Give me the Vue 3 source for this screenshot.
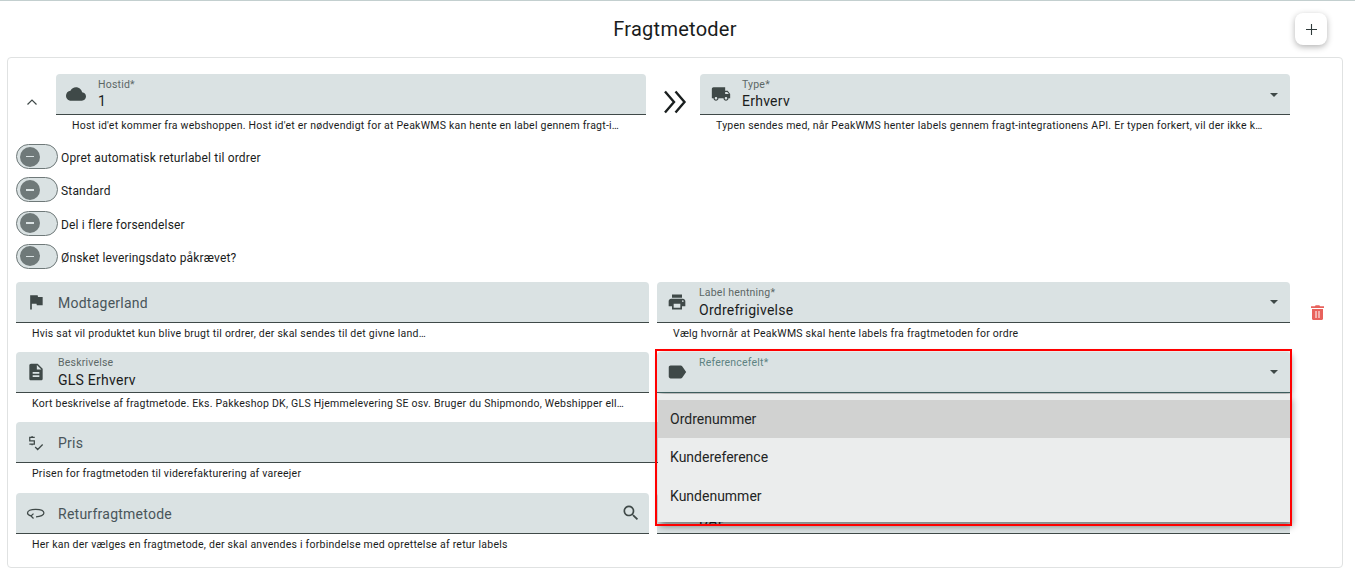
<script setup>
const icons = {
  cloud: 'M19.35 10.04C18.67 6.59 15.64 4 12 4 9.11 4 6.6 5.64 5.35 8.04 2.34 8.36 0 10.91 0 14c0 3.31 2.69 6 6 6h13c2.76 0 5-2.24 5-5 0-2.64-2.05-4.78-4.65-4.96z',
  truck: 'M20 8h-3V4H3c-1.1 0-2 .9-2 2v11h2c0 1.66 1.34 3 3 3s3-1.34 3-3h6c0 1.66 1.34 3 3 3s3-1.34 3-3h2v-5l-3-4zM6 18.5c-.83 0-1.5-.67-1.5-1.5s.67-1.5 1.5-1.5 1.5.67 1.5 1.5-.67 1.5-1.5 1.5zm13.5-9l1.96 2.5H17V9.5h2.5zm-1.5 9c-.83 0-1.5-.67-1.5-1.5s.67-1.5 1.5-1.5 1.5.67 1.5 1.5-.67 1.5-1.5 1.5z',
  flag: 'M14.4 6L14 4H5v17h2v-7h5.6l.4 2h7V6z',
  print: 'M19 8H5c-1.66 0-3 1.34-3 3v6h4v4h12v-4h4v-6c0-1.66-1.34-3-3-3zm-3 11H8v-5h8v5zm3-7c-.55 0-1-.45-1-1s.45-1 1-1 1 .45 1 1-.45 1-1 1zm-1-9H6v4h12V3z',
  doc: 'M14 2H6c-1.1 0-1.99.9-1.99 2L4 20c0 1.1.89 2 1.99 2H18c1.1 0 2-.9 2-2V8l-6-6zm2 16H8v-2h8v2zm0-4H8v-2h8v2zm-3-5V3.5L18.5 9H13z',
  label: 'M17.63 5.84C17.27 5.33 16.67 5 16 5L5 5.01C3.9 5.01 3 5.9 3 7v10c0 1.1.9 1.99 2 1.99L16 19c.67 0 1.27-.33 1.63-.84L22 12l-4.37-6.16z',
  price: 'M10.500 6.500H4.500V10.500H10V14.500H4M7.300 4.800V6.500M7.300 14.500V16M11 18L14 21L20 15',
  search: 'M15.5 14h-.79l-.28-.27C15.41 12.59 16 11.11 16 9.5 16 5.91 13.09 3 9.5 3S3 5.91 3 9.5 5.91 16 9.5 16c1.61 0 3.09-.59 4.23-1.57l.27.28v.79l5 4.99L20.49 19l-4.99-5zm-6 0C7.01 14 5 11.99 5 9.500S7.01 5 9.5 5 14 7.01 14 9.5 11.99 14 9.5 14z',
  ret: 'M12 16.500C17.500 16.500 21.500 14.500 21.500 12C21.500 9.300 17.500 7.500 11.500 7.500C5.500 7.500 1.800 9.300 1.800 12C1.800 13.500 3 14.700 6 15.500M9 12.800L6 15.600L9 18.600'
}
const lined = ['price', 'ret']
const toggles = ['Opret automatisk returlabel til ordrer', 'Standard', 'Del i flere forsendelser', 'Ønsket leveringsdato påkrævet?']
const top = [
  { icon: 'cloud', label: 'Hostid*', value: '1', help: "Host id'et kommer fra webshoppen. Host id'et er nødvendigt for at PeakWMS kan hente en label gennem fragt-i…" },
  { icon: 'truck', label: 'Type*', value: 'Erhverv', select: true, help: 'Typen sendes med, når PeakWMS henter labels gennem fragt-integrationens API. Er typen forkert, vil der ikke k…' }
]
const rows = [
  { id: 1, icon: 'flag', col: 'c1', placeholder: 'Modtagerland', help: 'Hvis sat vil produktet kun blive brugt til ordrer, der skal sendes til det givne land…' },
  { id: 2, icon: 'print', col: 'c2', label: 'Label hentning*', value: 'Ordrefrigivelse', select: true, help: 'Vælg hvornår at PeakWMS skal hente labels fra fragtmetoden for ordre' },
  { id: 3, icon: 'doc', col: 'c1', label: 'Beskrivelse', value: 'GLS Erhverv', help: 'Kort beskrivelse af fragtmetode. Eks. Pakkeshop DK, GLS Hjemmelevering SE osv. Bruger du Shipmondo, Webshipper ell…' },
  { id: 4, icon: 'label', col: 'c2', label: 'Referencefelt*', select: true, open: true },
  { id: 5, icon: 'price', col: 'wide', placeholder: 'Pris', help: 'Prisen for fragtmetoden til viderefakturering af vareejer' },
  { id: 6, icon: 'ret', col: 'c1 low', placeholder: 'Returfragtmetode', search: true, help: 'Her kan der vælges en fragtmetode, der skal anvendes i forbindelse med oprettelse af retur labels' },
  { id: 7, icon: 'label', col: 'c2 low', label: '', value: 'DAP', select: true }
]
const options = ['Ordrenummer', 'Kundereference', 'Kundenummer']
</script>

<template>
  <div class="page">
    <header class="head">
      <span></span>
      <h1>Fragtmetoder</h1>
      <button class="add" aria-label="Tilføj">
        <svg width="11" height="11" viewBox="0 0 11 11"><path d="M5.500 0v11M0 5.500h11" stroke="#2f3a3a" stroke-width="1.100" fill="none" /></svg>
      </button>
    </header>

    <section class="card">
      <div class="top">
        <svg class="collapse" viewBox="0 0 12 8"><path d="M1.500 6.500L6 2l4.500 4.500" stroke="#3f4948" stroke-width="1.200" fill="none" /></svg>
        <div class="cell">
          <div class="field">
            <svg class="ico" viewBox="0 0 24 24"><path :d="icons[top[0].icon]" /></svg>
            <div class="txt"><small>{{ top[0].label }}</small><b>{{ top[0].value }}</b></div>
          </div>
          <p class="help">{{ top[0].help }}</p>
        </div>
        <svg class="flow" viewBox="0 0 24 24"><path d="M2 1.500L11 12 2 22.500M12.500 1.500L21.500 12 12.500 22.500" stroke="#1a1f1f" stroke-width="2.400" fill="none" /></svg>
        <div class="cell">
          <div class="field">
            <svg class="ico shift" viewBox="0 0 24 24"><path :d="icons[top[1].icon]" /></svg>
            <div class="txt"><small>{{ top[1].label }}</small><b>{{ top[1].value }}</b></div>
            <i class="caret"></i>
          </div>
          <p class="help">{{ top[1].help }}</p>
        </div>
      </div>

      <div class="toggles">
        <label v-for="t in toggles" :key="t" class="toggle">
          <span class="track"><span class="knob"><span class="dash"></span></span></span>
          <span class="tname">{{ t }}</span>
        </label>
      </div>

      <div class="grid">
        <template v-for="r in rows" :key="r.id">
          <div class="cell" :class="[r.col, { open: r.open }]">
            <div class="field" :class="{ focus: r.open }">
              <svg class="ico" :class="{ line: lined.includes(r.icon) }" viewBox="0 0 24 24"><path :d="icons[r.icon]" /></svg>
              <div v-if="r.placeholder" class="ph">{{ r.placeholder }}</div>
              <div v-else class="txt lower"><small class="lab">{{ r.label }}</small><b class="val">{{ r.value }}</b></div>
              <i v-if="r.select" class="caret"></i>
              <svg v-if="r.search" class="find" viewBox="0 0 24 24"><path :d="icons.search" /></svg>
            </div>
            <p v-if="r.help" class="help">{{ r.help }}</p>
            <ul v-if="r.open" class="menu">
              <li v-for="(o, i) in options" :key="o" :class="{ active: i === 0 }">{{ o }}</li>
            </ul>
            <div v-if="r.open" class="mark"></div>
          </div>
          <svg v-if="r.icon === 'print'" class="trash" viewBox="0 0 13 15">
            <path d="M1 4h11v9.800c0 .7-.5 1.200-1.200 1.200H2.200C1.500 15 1 14.500 1 13.800zM0 1.300h3.800L4.700.3h3.600l.9 1H13v1.700H0z" fill="#e8625c" />
            <path d="M5 6v7M8 6v7" stroke="#fff" stroke-width="1" />
          </svg>
        </template>
      </div>
    </section>
  </div>
</template>

<style>
html, body { margin: 0; background: #fff; }
</style>

<style scoped>
* { box-sizing: border-box; }
.page { font-family: Roboto, "Liberation Sans", sans-serif; color: #1a1c1c; height: 579px; overflow: hidden; border-top: 1px solid #c3cfcf; }
.head { height: 56px; display: grid; grid-template-columns: 1fr auto 1fr; align-items: center; padding: 0 28px 0 23px; }
.head h1 { margin: 0; font-size: 20px; font-weight: 400; letter-spacing: .25px; }
.add { justify-self: end; width: 32px; height: 32px; border: 0; border-radius: 8px; background: #fff; box-shadow: 0 2px 6px rgba(0,0,0,.3); display: flex; align-items: center; justify-content: center; padding: 0; }
.card { margin: 0 12px 0 7px; height: 511px; border: 1px solid #e0e2e2; border-radius: 4px; padding: 16px 8px 0; }
.top { display: flex; align-items: flex-start; padding-right: 44px; height: 70px; }
.collapse { flex: none; width: 40px; height: 8px; margin-top: 24px; padding: 0 18px 0 10px; }
.flow { flex: none; width: 54px; height: 24px; margin-top: 16px; padding: 0 13px 0 17px; }
.cell { flex: 1; min-width: 0; height: 70px; position: relative; }
.field { height: 41px; background: #dae2e3; border-bottom: 1.500px solid #3f4948; border-radius: 4px 4px 0 0; display: flex; align-items: center; position: relative; }
.ico { position: absolute; left: 10px; top: 10px; width: 20px; height: 20px; fill: #3f4948; }
.ico.shift { left: 11px; }
.ico.line { fill: none; stroke: #3f4948; stroke-width: 1.500; }
.txt { position: absolute; left: 42px; top: 4px; display: flex; flex-direction: column; }
.txt small { font-size: 10.500px; line-height: 14px; min-height: 14px; color: #5c6766; letter-spacing: .2px; }
.txt b { font-weight: 400; font-size: 14px; line-height: 18px; min-height: 18px; letter-spacing: .25px; }
.txt.lower b { margin-top: 1.500px; }
.ph { position: absolute; left: 42px; top: 13px; font-size: 14px; line-height: 17px; letter-spacing: .25px; color: #49555a; }
.caret { position: absolute; right: 12.500px; top: 18.500px; width: 0; height: 0; border-left: 4.500px solid transparent; border-right: 4.500px solid transparent; border-top: 4.500px solid #3f4948; }
.find { position: absolute; right: 8px; top: 10px; width: 20px; height: 20px; fill: #3f4948; }
.help { margin: 0; padding: 4px 16px 0; font-size: 10.500px; line-height: 14px; letter-spacing: .24px; color: #1a1c1c; white-space: nowrap; overflow: hidden; }
.toggles { display: flex; flex-direction: column; }
.toggle { height: 33.300px; display: flex; align-items: flex-start; gap: 3px; font-size: 12px; line-height: 25px; letter-spacing: .17px; }
.tname { position: relative; top: 2px; }
.track { width: 42px; height: 25px; border: 1px solid #6f7979; border-radius: 13px; background: #dae2e3; display: flex; align-items: center; padding-left: 3px; }
.knob { width: 20px; height: 20px; border-radius: 50%; background: #6f7979; display: flex; align-items: center; justify-content: center; }
.dash { width: 8px; height: 1.500px; background: #dae2e3; }
.grid { margin-top: 4.800px; display: grid; grid-template-columns: 1fr 1fr 36px; column-gap: 8px; align-items: start; }
.c1 { grid-column: 1; }
.c2 { grid-column: 2; }
.wide { grid-column: 1 / 3; }
.low { margin-top: 1px; }
.trash { grid-column: 3; grid-row: 1; width: 13px; height: 15px; margin: 23px 0 0 13px; }
.open { z-index: 3; }
.focus { border-bottom-color: #3f6060; box-shadow: 2px 2px 6px rgba(0,0,0,.35); }
.focus .txt small { color: #5d8282; }
.focus .ico { left: 9px; top: 9px; width: 22px; height: 22px; }
.menu { position: absolute; left: 1px; right: 0; top: 42px; margin: 0; padding: 6px 0 7px; list-style: none; background: #ebeded; box-shadow: 2px 4px 7px rgba(0,0,0,.45); font-size: 14px; }
.menu li { height: 38.500px; line-height: 38px; padding-left: 12px; color: #1f2525; }
.menu li.active { background: #d1d2d1; }
.mark { position: absolute; left: -2px; top: -3px; width: 637px; height: 177px; border: 2px solid #f00; pointer-events: none; }
</style>
